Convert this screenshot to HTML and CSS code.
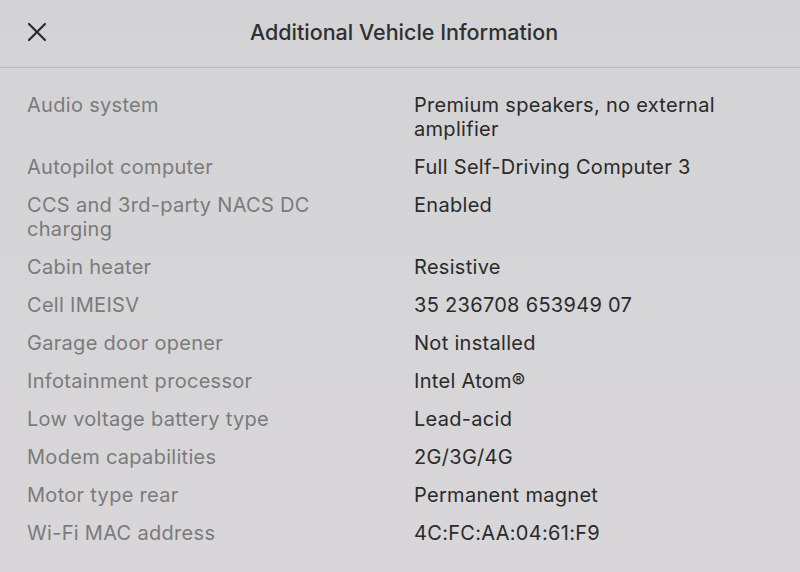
FILE: index.html
```html
<!DOCTYPE html>
<html>
<head>
<meta charset="utf-8">
<link rel="stylesheet" href="styles.css">
</head>
<body>
<div class="screen">
  <header class="header">
    <svg class="close" width="20" height="20" viewBox="0 0 20 20"><path d="M2 2 L18 18 M18 2 L2 18" stroke="#2b2b2b" stroke-width="2.2" stroke-linecap="round" fill="none"/></svg>
    <h1 class="title">Additional Vehicle Information</h1>
  </header>
  <div class="list">
    <div class="row"><div class="label">Audio system</div><div class="value">Premium speakers, no external amplifier</div></div>
    <div class="row"><div class="label">Autopilot computer</div><div class="value">Full Self-Driving Computer 3</div></div>
    <div class="row"><div class="label">CCS and 3rd-party NACS DC charging</div><div class="value">Enabled</div></div>
    <div class="row"><div class="label">Cabin heater</div><div class="value">Resistive</div></div>
    <div class="row"><div class="label">Cell IMEISV</div><div class="value">35 236708 653949 07</div></div>
    <div class="row"><div class="label">Garage door opener</div><div class="value">Not installed</div></div>
    <div class="row"><div class="label">Infotainment processor</div><div class="value">Intel Atom®</div></div>
    <div class="row"><div class="label">Low voltage battery type</div><div class="value">Lead-acid</div></div>
    <div class="row"><div class="label">Modem capabilities</div><div class="value">2G/3G/4G</div></div>
    <div class="row"><div class="label">Motor type rear</div><div class="value">Permanent magnet</div></div>
    <div class="row"><div class="label">Wi-Fi MAC address</div><div class="value">4C:FC:AA:04:61:F9</div></div>
  </div>
</div>
</body>
</html>
```
FILE: styles.css
```css
html, body {
  margin: 0;
  padding: 0;
}
body {
  width: 800px;
  height: 572px;
  overflow: hidden;
  background: #d4d3d5;
  font-family: Inter, "Liberation Sans", sans-serif;
}
.screen {
  height: 572px;
  background: linear-gradient(180deg, #d3d2d4 0%, #d6d5d7 60%, #d8d6d8 100%);
}
.header {
  height: 67px;
  border-bottom: 1px solid #b9b8ba;
  display: flex;
  align-items: center;
  justify-content: center;
  position: relative;
}
.close {
  position: absolute;
  left: 27px;
  top: 22px;
}
.title {
  margin: 0;
  font-size: 21.5px;
  font-weight: 500;
  color: #303030;
  padding-left: 8px;
  position: relative;
  top: -2px;
}
.list {
  padding: 25px 0 0 27px;
  display: flex;
  flex-direction: column;
  gap: 14px;
}
.row {
  display: grid;
  grid-template-columns: 387px 345px;
  font-size: 20px;
  line-height: 24px;
  letter-spacing: 0.3px;
}
.label {
  color: #7b7a7c;
  max-width: 320px;
}
.value {
  color: #2a2a2b;
}
```
